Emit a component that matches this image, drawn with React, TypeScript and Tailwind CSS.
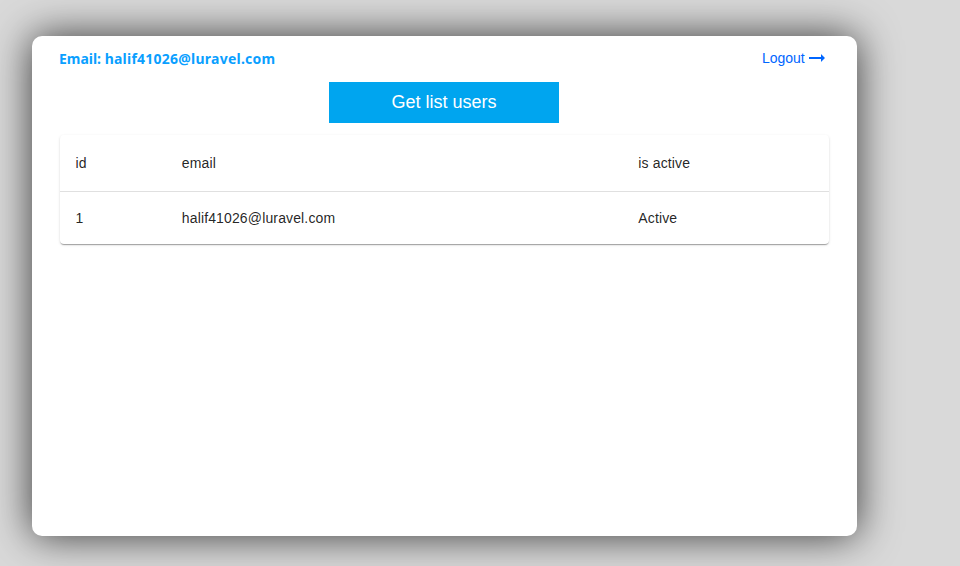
export default function App() {
  return (
    <div className="h-[566px] w-[960px] overflow-hidden bg-[#d9d9d9] pt-[36px] pl-[32px] font-['Liberation_Sans',Arial,sans-serif]">
      <main className="flex h-[500px] w-[825px] flex-col rounded-[10px] bg-white pr-[28px] pl-[27.6px] shadow-[0_0_40px_rgba(0,0,0,0.75)]">
        <header className="flex h-[46px] items-center justify-between pb-[2px]">
          <h1 className="-ml-[0.4px] font-['Noto_Sans','Open_Sans',sans-serif] text-[15px] font-bold text-[#0a9fff]">
            <span className="inline-block origin-left scale-x-[0.93] whitespace-nowrap">
              Email: <span className="tracking-[0.28px]">halif41026@luravel.com</span>
            </span>
          </h1>
          <a className="flex items-center pr-[4px] text-[14px] text-[#0066ff]">
            Logout
            <svg className="ml-[4px]" width="16.3" height="8" viewBox="0 0 16.3 8">
              <path d="M0 3h12V0l4 4-4 4V5H0z" fill="currentColor" />
            </svg>
          </a>
        </header>
        <button className="mr-[0.6px] h-[41px] w-[230px] self-center bg-[#00a5ef] text-[18px] text-white">Get list users</button>
        <table className="mt-[12px] w-full table-fixed border-separate border-spacing-0 rounded-[4px] text-left text-[14px] tracking-[0.14px] text-black/87 shadow-[0_2px_1px_-1px_rgba(0,0,0,0.2),0_1px_1px_0_rgba(0,0,0,0.14),0_1px_3px_0_rgba(0,0,0,0.12)]">
          <thead>
            <tr className="h-[57px]">
              <th className="w-[106px] border-b border-[#e0e0e0] pl-[16px] font-normal">id</th>
              <th className="w-[456.5px] border-b border-[#e0e0e0] pl-[16.2px] font-normal">email</th>
              <th className="border-b border-[#e0e0e0] pl-[16.2px] font-normal">is active</th>
            </tr>
          </thead>
          <tbody>
            <tr className="h-[52px]">
              <td className="pl-[16px]">1</td>
              <td className="pl-[16.2px]">halif41026@luravel.com</td>
              <td className="pl-[16.2px]">Active</td>
            </tr>
          </tbody>
        </table>
      </main>
    </div>
  )
}
